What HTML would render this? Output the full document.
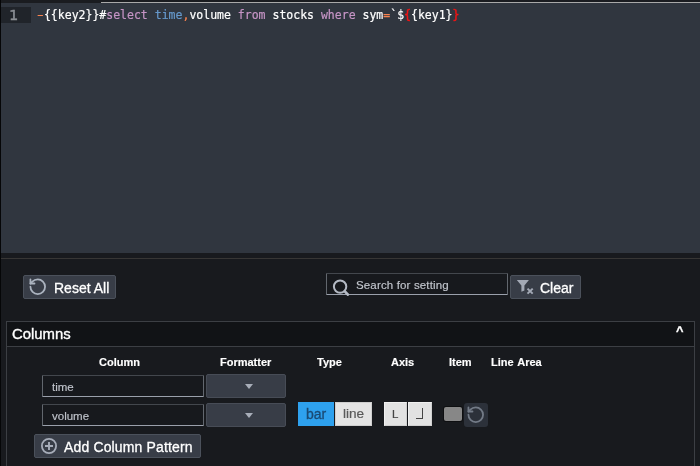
<!DOCTYPE html>
<html><head><meta charset="utf-8">
<style>
html,body{margin:0;padding:0;}
body{width:700px;height:466px;overflow:hidden;background:#181a1e;font-family:"Liberation Sans",sans-serif;position:relative;color:#fff;}
.abs{position:absolute;}
#code,.btn span,#search span,.th,.inp span,#phead .t,#gutter span,.tb span,#caret{will-change:transform;}
#topstrip{left:0;top:0;width:700px;height:3px;background:#1a1c20;}
#editor{left:1px;top:3px;width:699px;height:250px;background:#30363f;}
#leftstrip{left:0;top:0;width:1px;height:466px;background:#050607;}
#gutter{left:1px;top:7px;width:30px;height:16px;background:#20242a;color:#8b8f95;font-family:"DejaVu Sans Mono","Liberation Mono",monospace;font-size:14.8px;line-height:16px;-webkit-text-stroke:0.4px #8b8f95;}
#gutter span{position:absolute;left:7.6px;top:0.1px;}
#code{left:37px;top:7px;font-family:"DejaVu Sans Mono","Liberation Mono",monospace;font-size:11.5px;line-height:16px;white-space:pre;color:#fff;-webkit-text-stroke:0.2px currentColor;}
.kw{color:#c594c5;} .fn{color:#6699cc;} .op{color:#f9834f;} .rd{color:#f01414;-webkit-text-stroke:0.45px #f01414;}
.dash{display:inline-block;transform:scaleX(1.7);}
#hr{left:1px;top:258px;width:699px;height:1px;background:#373635;}
.btn{background:#383d47;border:1px solid #4b515b;border-radius:2px;box-sizing:border-box;color:#fff;font-size:14px;}
.btn span{position:absolute;line-height:16px;white-space:pre;-webkit-text-stroke:0.3px #fff;}
#reset{left:23px;top:275px;width:93px;height:24px;}
#clear{left:510px;top:275px;width:71px;height:24px;}
#search{left:326px;top:273px;width:182px;height:22px;box-sizing:border-box;border:1px solid #62676e;border-top-color:#43474d;border-bottom-color:#9aa0ab;border-radius:1px;background:#17191d;}
#search span{position:absolute;left:29px;top:4px;font-size:11.5px;letter-spacing:0.15px;color:#c3c7ce;line-height:14px;white-space:pre;-webkit-text-stroke:0.15px #c3c7ce;}
#panel{left:6px;top:321px;width:689px;height:160px;box-sizing:border-box;border:1px solid #3c3f44;background:#181a1e;}
#phead{left:0;top:0;width:687px;height:24px;background:#111316;border-bottom:1px solid #3c3f44;}
#phead .t{position:absolute;left:5px;top:2.8px;font-size:14.9px;line-height:18px;color:#fff;-webkit-text-stroke:0.35px #fff;}
#caret{left:675.8px;top:323px;font-size:12.8px;-webkit-text-stroke:0.3px #fff;font-weight:bold;line-height:16px;color:#fff;}
.th{font-size:11px;font-weight:bold;color:#fff;line-height:14px;white-space:pre;-webkit-text-stroke:0.15px #fff;}
.inp{box-sizing:border-box;border:1px solid #62676e;border-top-color:#43474d;border-bottom-color:#9aa0ab;border-radius:1px;background:#17191d;height:22px;width:162px;font-size:11.5px;color:#c0c4cc;}
.inp span{position:absolute;left:9px;top:4px;line-height:14px;-webkit-text-stroke:0.15px #c0c4cc;}
.sel{box-sizing:border-box;background:#383d47;border:1px solid #474c56;border-radius:2px;width:80px;height:24px;}
.sel i{position:absolute;left:38px;top:9px;width:0;height:0;border-left:4px solid transparent;border-right:4px solid transparent;border-top:5px solid #a8aeb9;}
.tb{box-sizing:border-box;height:24px;font-size:14px;}
.tb span{position:absolute;line-height:16px;top:4px;}
</style></head><body>
<div class="abs" id="topstrip"></div>
<div class="abs" id="editor"></div>
<div class="abs" id="leftstrip"></div>
<div class="abs" style="left:101px;top:2px;width:599px;height:1px;background:#a9a9a9;"></div>
<div class="abs" id="gutter"><span>1</span></div>
<div class="abs" id="code"><span class="op dash">-</span>{{key2}}#<span class="kw">select</span> <span class="fn">time</span><span class="op">,</span>volume <span class="kw">from</span> stocks <span class="kw">where</span> sym<span class="op">=</span>`$<span class="rd">{</span>{key1}<span class="rd">}</span></div>
<div class="abs" id="hr"></div>

<div class="abs btn" id="reset">
<svg class="abs" style="left:4.15px;top:1.25px" width="19.5" height="19.5" viewBox="0 0 24 24" fill="none" stroke="#abb3bf" stroke-width="2.2" stroke-linecap="round" stroke-linejoin="round"><path d="M3 12a9 9 0 1 0 9-9 9.75 9.75 0 0 0-6.74 2.74L3 8"/><path d="M3 3v5h5"/></svg>
<span style="left:29.5px;top:4px;">Reset All</span></div>
<div class="abs" id="search">
<svg class="abs" style="left:5px;top:5px" width="20" height="20" viewBox="0 0 20 20"><circle cx="8.1" cy="7.6" r="6.2" fill="none" stroke="#b4bac4" stroke-width="2"/><path d="M12.8 12.4L15.9 15.6" stroke="#b4bac4" stroke-width="2.8" stroke-linecap="round"/></svg>
<span>Search for setting</span></div>
<div class="abs btn" id="clear">
<svg class="abs" style="left:5px;top:3px" width="20" height="18" viewBox="0 0 20 18"><path d="M0.8 1.1H12.9L8.4 6.6V11.6L5.4 12.7V6.6Z" fill="#a3a9b5"/><path d="M11.5 9.6L16.7 14.6M16.7 9.6L11.5 14.6" stroke="#a3a9b5" stroke-width="2"/></svg>
<span style="left:29px;top:4px;">Clear</span></div>

<div class="abs" id="panel">
  <div class="abs" id="phead"><span class="t">Columns</span></div>
</div>
<div class="abs" id="caret">^</div>
<div class="abs th" style="left:98.5px;top:355px;">Column</div>
<div class="abs th" style="left:220px;top:355px;">Formatter</div>
<div class="abs th" style="left:317px;top:355px;">Type</div>
<div class="abs th" style="left:391px;top:355px;">Axis</div>
<div class="abs th" style="left:449px;top:355px;">Item</div>
<div class="abs th" style="left:490.5px;top:355px;word-spacing:1px;">Line Area</div>

<div class="abs inp" style="left:42px;top:375px;"><span>time</span></div>
<div class="abs sel" style="left:206px;top:374px;"><i></i></div>
<div class="abs inp" style="left:42px;top:404px;"><span>volume</span></div>
<div class="abs sel" style="left:206px;top:403px;"><i></i></div>

<div class="abs tb" style="left:298px;top:402px;width:36px;background:#2ea1ee;color:#1a4a73;"><span style="left:7.8px;-webkit-text-stroke:0.3px #1a4a73;">bar</span></div>
<div class="abs tb" style="left:335px;top:402px;width:37px;background:#e4e4e4;border:1px solid #cfcfcf;color:#5a5a5a;"><span style="left:6.8px;top:3px;font-size:13.6px;-webkit-text-stroke:0.2px #5a5a5a;">line</span></div>
<div class="abs tb" style="left:384px;top:402px;width:23px;background:#e2e2e2;border:1px solid #f0f0f0;border-right-color:#d0d0d0;border-bottom-color:#d0d0d0;color:#444;font-size:11.5px;"><span style="left:7.3px;top:3px;line-height:16px;-webkit-text-stroke:0.2px #444;">L</span></div>
<div class="abs tb" style="left:408px;top:402px;width:24px;background:#e2e2e2;border:1px solid #f0f0f0;border-right-color:#d0d0d0;border-bottom-color:#d0d0d0;"><div class="abs" style="left:7px;top:5px;width:6px;height:10px;border-right:1px solid #444;border-bottom:1px solid #444;"></div></div>
<div class="abs" style="left:444px;top:407px;width:18px;height:14px;background:#878787;border-radius:2px;box-shadow:0 0 0 1px #0e0f11;"></div>
<div class="abs" style="left:464px;top:403px;width:24px;height:24px;background:#2c313a;border-radius:3px;">
<svg class="abs" style="left:2.25px;top:2.15px" width="19.5" height="19.5" viewBox="0 0 24 24" fill="none" stroke="#737b87" stroke-width="2.2" stroke-linecap="round" stroke-linejoin="round"><path d="M3 12a9 9 0 1 0 9-9 9.75 9.75 0 0 0-6.74 2.74L3 8"/><path d="M3 3v5h5"/></svg></div>

<div class="abs btn" id="addcol" style="left:34px;top:434px;width:167px;height:24px;">
<svg class="abs" style="left:6px;top:3px" width="16" height="16" viewBox="0 0 16 16"><circle cx="8" cy="8" r="7.1" fill="none" stroke="#a7adb9" stroke-width="1.8"/><path d="M4 8H12M8 4V12" stroke="#a7adb9" stroke-width="1.9"/></svg>
<span style="left:29.2px;top:4px;letter-spacing:0.15px;">Add Column Pattern</span></div>
</body></html>
